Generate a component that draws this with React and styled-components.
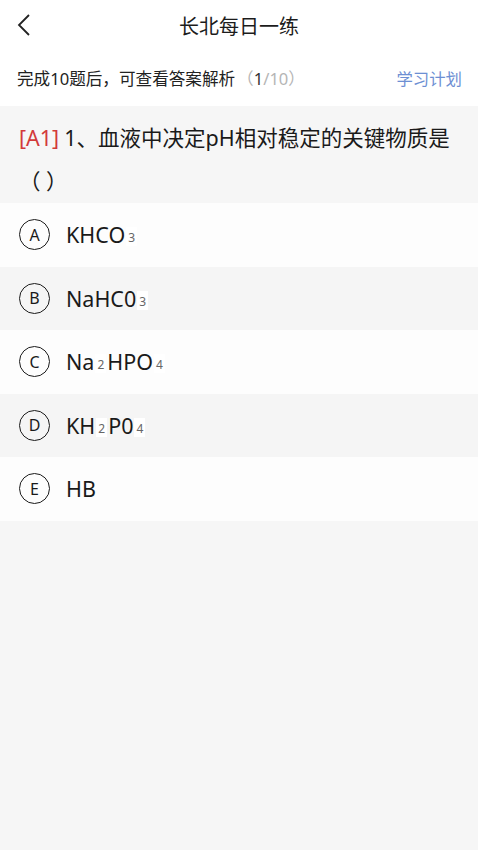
import styled, { createGlobalStyle } from "styled-components";

const GlobalStyle = createGlobalStyle`
  html, body {
    margin: 0;
    padding: 0;
    background: #f6f6f6;
    font-family: "Noto Sans", "Noto Sans CJK SC", sans-serif;
  }
`;

const Page = styled.div`
  width: 478px;
  min-height: 850px;
  background: #f6f6f6;
  display: flex;
  flex-direction: column;
`;

const Header = styled.div`
  height: 50px;
  background: #ffffff;
  display: flex;
  align-items: center;
  justify-content: center;
  position: relative;
`;

const BackButton = styled.div`
  position: absolute;
  left: 17px;
  top: 12px;
  width: 24px;
  height: 26px;
  display: flex;
  align-items: center;
`;

const Title = styled.div`
  font-size: 20px;
  color: #1c1c1c;
`;

const InfoBar = styled.div`
  height: 56px;
  background: #ffffff;
  display: flex;
  align-items: center;
  justify-content: space-between;
  padding: 0 16px 0 17px;
`;

const InfoText = styled.div`
  font-size: 16.6px;
  color: #222;
`;

const Count = styled.span`
  color: #b5b5b5;
  margin-left: 2px;
`;

const Current = styled.span`
  color: #333;
`;

const PlanLink = styled.div`
  font-size: 16.4px;
  color: #6d8fd3;
`;

const Question = styled.div`
  background: #f6f6f6;
  padding: 10px 18px 1px 19px;
  font-size: 21.5px;
  line-height: 43px;
  color: #1a1a1a;
`;

const Tag = styled.span`
  color: #d23a3a;
  padding-right: 5px;
`;

const Options = styled.div`
  display: flex;
  flex-direction: column;
`;

const OptionRow = styled.div`
  height: 63.5px;
  background: ${(p) => (p.$alt ? "#f5f5f5" : "#fdfdfd")};
  display: flex;
  align-items: center;
  padding-left: 19px;
  gap: 16px;
`;

const Circle = styled.div`
  width: 29px;
  height: 29px;
  border: 1.6px solid #1a1a1a;
  border-radius: 50%;
  display: flex;
  align-items: center;
  justify-content: center;
  font-size: 16px;
  color: #1a1a1a;
`;

const OptionText = styled.div`
  font-size: 21.5px;
  color: #1a1a1a;
  display: flex;
  align-items: center;
`;

const Sub = styled.span`
  font-size: 12px;
  color: #666;
  background: #ffffff;
  padding: 2px 2px 0;
  margin: 4px 1px 0;
`;

const options = [
  { key: "A", parts: ["KHCO", ["3"]] },
  { key: "B", parts: ["NaHC0", ["3"]] },
  { key: "C", parts: ["Na", ["2"], "HPO", ["4"]] },
  { key: "D", parts: ["KH", ["2"], "P0", ["4"]] },
  { key: "E", parts: ["HB"] },
];

export default function App() {
  return (
    <Page>
      <GlobalStyle />
      <Header>
        <BackButton>
          <svg width="14" height="24" viewBox="0 0 14 24">
            <path d="M12 2 L2 12 L12 22" fill="none" stroke="#222" strokeWidth="1.8" />
          </svg>
        </BackButton>
        <Title>长北每日一练</Title>
      </Header>
      <InfoBar>
        <InfoText>
          完成10题后，可查看答案解析
          <Count>
            （<Current>1</Current>/10）
          </Count>
        </InfoText>
        <PlanLink>学习计划</PlanLink>
      </InfoBar>
      <Question>
        <Tag>[A1]</Tag>1、血液中决定pH相对稳定的关键物质是（ ）
      </Question>
      <Options>
        {options.map((o, i) => (
          <OptionRow key={o.key} $alt={i % 2 === 1}>
            <Circle>{o.key}</Circle>
            <OptionText>
              {o.parts.map((p, j) =>
                Array.isArray(p) ? <Sub key={j}>{p[0]}</Sub> : <span key={j}>{p}</span>
              )}
            </OptionText>
          </OptionRow>
        ))}
      </Options>
    </Page>
  );
}
